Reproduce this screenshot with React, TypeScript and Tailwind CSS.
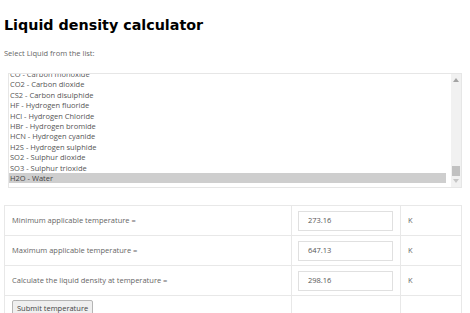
import React from "react";

const items = [
  "CO - Carbon monoxide",
  "CO2 - Carbon dioxide",
  "CS2 - Carbon disulphide",
  "HF - Hydrogen fluoride",
  "HCl - Hydrogen Chloride",
  "HBr - Hydrogen bromide",
  "HCN - Hydrogen cyanide",
  "H2S - Hydrogen sulphide",
  "SO2 - Sulphur dioxide",
  "SO3 - Sulphur trioxide",
  "H2O - Water",
];

const rows = [
  { label: "Minimum applicable temperature =", value: "273.16" },
  { label: "Maximum applicable temperature =", value: "647.13" },
  { label: "Calculate the liquid density at temperature =", value: "298.16" },
];

export default function App() {
  return (
    <div className="w-[470px] h-[313px] overflow-hidden bg-white pl-[4px] font-['Open_Sans',sans-serif]">
      <h1 className="pt-[17px] text-[14.3px] leading-[17px] font-bold text-black font-['DejaVu_Sans',sans-serif]">
        Liquid density calculator
      </h1>
      <p className="mt-[14px] text-[7.5px] leading-[10px] text-[#666]">Select Liquid from the list:</p>
      <div className="mt-[15px] ml-[4px] w-[454px] h-[115px] border border-[#e6e6e6] flex overflow-hidden">
        <div className="flex-1 overflow-hidden pr-[5px]">
          <div className="-mt-[5px]">
            {items.map((it, i) => (
              <div
                key={it}
                className={`h-[10.4px] leading-[10.4px] pl-[1px] text-[7.5px] whitespace-nowrap ${
                  i === items.length - 1 ? "bg-[#cecece] text-[#444]" : "text-[#555]"
                }`}
              >
                {it}
              </div>
            ))}
          </div>
        </div>
        <div className="w-[10px] bg-[#f1f1f1] flex flex-col items-center">
          <svg width="6" height="4" viewBox="0 0 6 4" className="mt-[4px]">
            <polygon points="3,0 6,4 0,4" fill="#a3a3a3" />
          </svg>
          <div className="flex-1" />
          <div className="w-[8px] h-[10px] bg-[#c1c1c1]" />
          <svg width="6" height="4" viewBox="0 0 6 4" className="mt-[3px] mb-[4px]">
            <polygon points="0,0 6,0 3,4" fill="#c6c6c6" />
          </svg>
        </div>
      </div>
      <div className="mt-[17px] w-[458px] border-l border-t border-[#e8e8e8] grid grid-cols-[287px_109px_61px] text-[7.5px] text-[#666]">
        {rows.map((r) => (
          <React.Fragment key={r.label}>
            <div className="h-[30px] border-r border-b border-[#e8e8e8] pl-[7px] flex items-center">{r.label}</div>
            <div className="h-[30px] border-r border-b border-[#e8e8e8] pl-[6px] flex items-center">
              <div className="w-[95px] h-[20px] border border-[#e0e0e0] pl-[9px] flex items-center text-[#555]">
                {r.value}
              </div>
            </div>
            <div className="h-[30px] border-r border-b border-[#e8e8e8] pl-[7px] flex items-center">K</div>
          </React.Fragment>
        ))}
        <div className="h-[30px] border-r border-[#e8e8e8] pl-[7px] pt-[4px]">
          <button className="h-[17px] px-[4px] border border-[#b5b5b5] rounded-[2px] bg-[#efefef] text-[7.5px] text-[#444] leading-[15px]">
            Submit temperature
          </button>
        </div>
        <div className="h-[30px] border-r border-[#e8e8e8]" />
        <div className="h-[30px] border-r border-[#e8e8e8]" />
      </div>
    </div>
  );
}
